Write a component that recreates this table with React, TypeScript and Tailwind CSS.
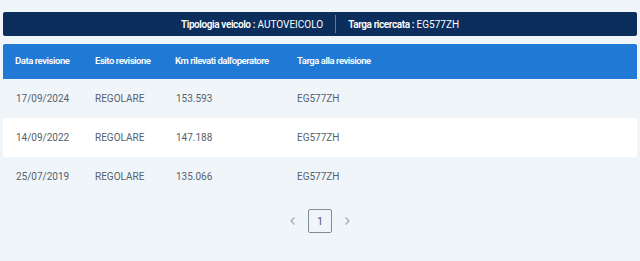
const rows = [
  { data: "17/09/2024", esito: "REGOLARE", km: "153.593", targa: "EG577ZH" },
  { data: "14/09/2022", esito: "REGOLARE", km: "147.188", targa: "EG577ZH" },
  { data: "25/07/2019", esito: "REGOLARE", km: "135.066", targa: "EG577ZH" },
];

function ChevronLeft() {
  return (
    <svg width="8" height="10" viewBox="0 0 8 10" fill="none">
      <path d="M5.5 1.5 2 5l3.5 3.5" stroke="#9aa8b6" strokeWidth="1.2" />
    </svg>
  );
}

function ChevronRight() {
  return (
    <svg width="8" height="10" viewBox="0 0 8 10" fill="none">
      <path d="M2.5 1.5 6 5 2.5 8.5" stroke="#9aa8b6" strokeWidth="1.2" />
    </svg>
  );
}

export default function App() {
  return (
    <div className="h-[261px] w-[640px] bg-[#f0f5fa] px-[3px] pt-[12px] font-['Roboto',sans-serif]">
      <div className="flex h-[24px] items-center justify-center gap-[12px] rounded-[2px] bg-[#0b2e5c] text-[10px] text-white">
        <div>
          <span className="font-semibold tracking-[-0.4px]">Tipologia veicolo :</span> AUTOVEICOLO
        </div>
        <div className="h-[18px] w-px bg-[#5d7a9c]" />
        <div>
          <span className="font-semibold tracking-[-0.4px]">Targa ricercata :</span> EG577ZH
        </div>
      </div>

      <div className="mt-[8px] flex h-[35px] items-center rounded-t-[2px] bg-[#2079d4] text-[9.5px] font-semibold tracking-[-0.45px] text-white">
        <div className="w-[92px] pl-[12px]">Data revisione</div>
        <div className="w-[80px]">Esito revisione</div>
        <div className="w-[122px]">Km rilevati dall'operatore</div>
        <div>Targa alla revisione</div>
      </div>

      {rows.map((r, i) => (
        <div
          key={r.data}
          className={`flex h-[39px] items-center text-[10px] text-[#55626e] ${i === 1 ? "bg-white" : ""}`}
        >
          <div className="w-[92px] pl-[13px]">{r.data}</div>
          <div className="w-[80px]">{r.esito}</div>
          <div className="w-[122px] pl-px">{r.km}</div>
          <div>{r.targa}</div>
        </div>
      ))}

      <div className="mt-[13px] flex items-center justify-center gap-[11px]">
        <ChevronLeft />
        <div className="flex h-[24px] w-[24px] items-center justify-center rounded-[2px] border border-[#7d8e99] text-[10px] text-[#44515c]">
          1
        </div>
        <ChevronRight />
      </div>
    </div>
  );
}
